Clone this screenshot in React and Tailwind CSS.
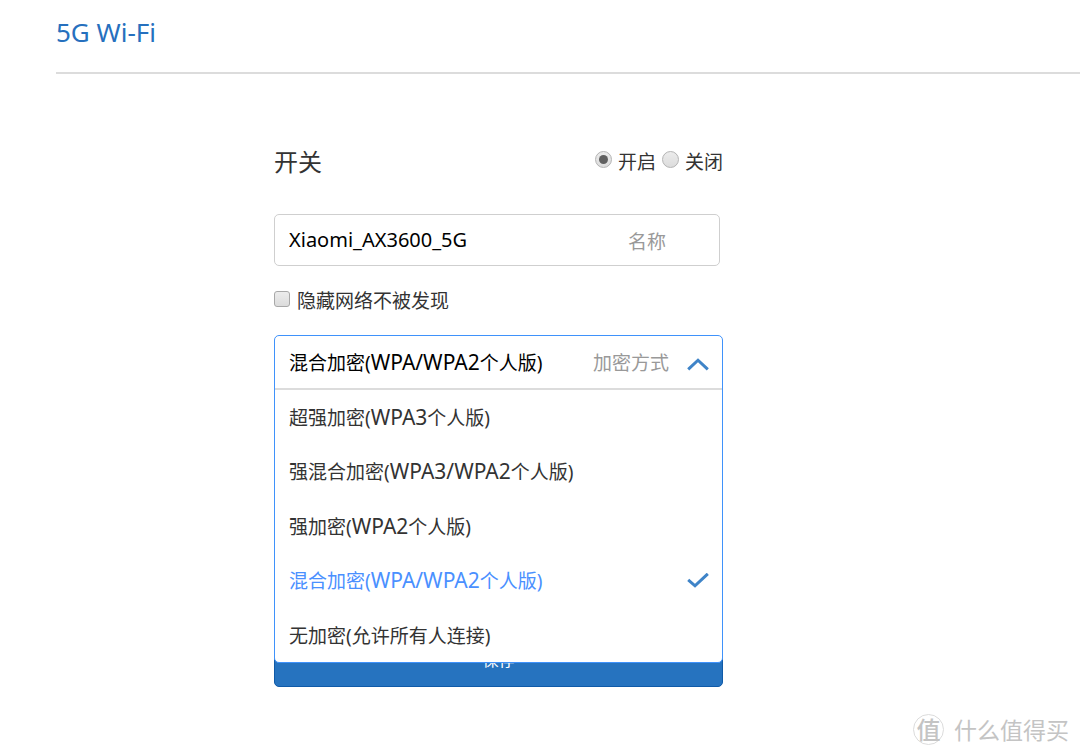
import React, { useState } from 'react'
import clsx from 'clsx'

const MODES = [
  { id: 'wpa3', label: '超强加密(WPA3个人版)' },
  { id: 'wpa3-mixed', label: '强混合加密(WPA3/WPA2个人版)' },
  { id: 'wpa2', label: '强加密(WPA2个人版)' },
  { id: 'wpa-mixed', label: '混合加密(WPA/WPA2个人版)' },
  { id: 'none', label: '无加密(允许所有人连接)' },
]

function Radio({ label, checked, onChange }) {
  return (
    <label className="flex items-center gap-[6px]">
      <span className="relative mb-[5px] flex">
        <input
          type="radio"
          name="wifi-switch"
          checked={checked}
          onChange={onChange}
          className="peer size-[17px] appearance-none rounded-full border border-[#b4b4b4] bg-linear-to-b from-[#ececec] to-[#dcdcdc]"
        />
        <span className="pointer-events-none absolute inset-[4px] hidden rounded-full bg-[#606060] peer-checked:block" />
      </span>
      {label}
    </label>
  )
}

// Latin runs are set a bit larger than the Chinese around them
function ModeLabel({ text }) {
  return (
    <span>
      {text.split(/([A-Z0-9/]+)/).map((part, i) =>
        i % 2 ? <span key={i} className="text-[21px] leading-none">{part}</span> : part
      )}
    </span>
  )
}

function ModeSelect({ value, onChange }) {
  const [open, setOpen] = useState(true)
  const current = MODES.find(m => m.id === value)

  return (
    <div className="relative mt-5 h-[54px]">
      <div className="absolute inset-x-0 top-0 z-10 rounded-[5px] border border-[#3f92fb] bg-white">
        <button
          type="button"
          aria-haspopup="listbox"
          aria-expanded={open}
          onClick={() => setOpen(!open)}
          className="flex h-[52px] w-full items-center justify-between pt-[3px] pr-[13px] pl-[14px] text-left text-black"
        >
          <ModeLabel text={current.label} />
          <span className="flex items-center gap-[18px] text-[#999]">
            加密方式
            <svg viewBox="0 0 22 14" className={clsx('h-[14px] w-[22px]', !open && 'rotate-180')} fill="none" stroke="#3f84c8" strokeWidth="3">
              <path d="M1.2 12.4 L11 3.2 L20.8 12.4" />
            </svg>
          </span>
        </button>

        {open && (
          <ul role="listbox" aria-label="加密方式" className="grid h-[274px] grid-rows-5 border-t-2 border-[#dcdcdc]">
            {MODES.map(mode => (
              <li key={mode.id} role="option" aria-selected={mode.id === value} className="flex">
                <button
                  type="button"
                  onClick={() => onChange(mode.id)}
                  className={clsx(
                    'flex flex-1 items-center justify-between pt-[2px] pr-[13px] pl-[14px] text-left',
                    mode.id === value ? 'text-[#4a90ff]' : 'text-[#333]'
                  )}
                >
                  <ModeLabel text={mode.label} />
                  {mode.id === value && (
                    <svg viewBox="0 0 22 16" className="h-4 w-[22px]" fill="none" stroke="#3f84c8" strokeWidth="3">
                      <path d="M1.2 6.8 L8 12.8 L20.8 0.8" />
                    </svg>
                  )}
                </button>
              </li>
            ))}
          </ul>
        )}
      </div>
    </div>
  )
}

export default function App() {
  const [enabled, setEnabled] = useState(true)
  const [name, setName] = useState('Xiaomi_AX3600_5G')
  const [hidden, setHidden] = useState(false)
  const [mode, setMode] = useState('wpa-mixed')

  return (
    <div className="relative min-h-screen bg-white pl-14 font-['Noto_Sans','Noto_Sans_CJK_SC',sans-serif] text-[19px] text-[#333]">
      <header className="flex h-[74px] items-center border-b-2 border-[#dcdcdc] pb-2">
        <h1 className="text-[26px] text-[#2670be]">5G Wi-Fi</h1>
      </header>

      <form className="ml-[218px] max-w-[449px] pt-16" onSubmit={e => e.preventDefault()}>
        <div className="flex h-12 items-center justify-between">
          <h2 className="text-2xl">开关</h2>
          <div className="flex items-center gap-[6px]">
            <Radio label="开启" checked={enabled} onChange={() => setEnabled(true)} />
            <Radio label="关闭" checked={!enabled} onChange={() => setEnabled(false)} />
          </div>
        </div>

        <div className="mt-7 mr-[3px] flex h-[52px] items-center rounded-[5px] border border-[#cfcfcf] pr-[53px] pl-[14px]">
          <input
            id="ssid"
            type="text"
            value={name}
            onChange={e => setName(e.target.value)}
            className="min-w-0 flex-1 text-xl text-black outline-none"
          />
          <label htmlFor="ssid" className="pt-1 text-[#999]">名称</label>
        </div>

        <label className="mt-[21px] flex h-7 items-center gap-[7px]">
          <input
            type="checkbox"
            checked={hidden}
            onChange={e => setHidden(e.target.checked)}
            className="mb-1 size-4 appearance-none rounded-[3px] border border-[#a8a8a8] bg-linear-to-b from-[#ececec] to-[#dcdcdc] checked:bg-[#606060]"
          />
          隐藏网络不被发现
        </label>

        <ModeSelect value={mode} onChange={setMode} />

        <button type="submit" className="mt-[246px] h-[52px] w-full rounded-[5px] border border-[#0f5aa8] bg-[#2673bf] pb-[3px] text-base text-white">
          保存
        </button>
      </form>

      {/* Watermark */}
      <div className="absolute right-[11px] bottom-[9px] flex items-center gap-[10px] text-[#c4c4c4]">
        <span className="flex size-[31px] items-center justify-center rounded-full border border-[#dcdcdc] text-2xl font-medium">值</span>
        <span className="text-[23px]">什么值得买</span>
      </div>
    </div>
  )
}
